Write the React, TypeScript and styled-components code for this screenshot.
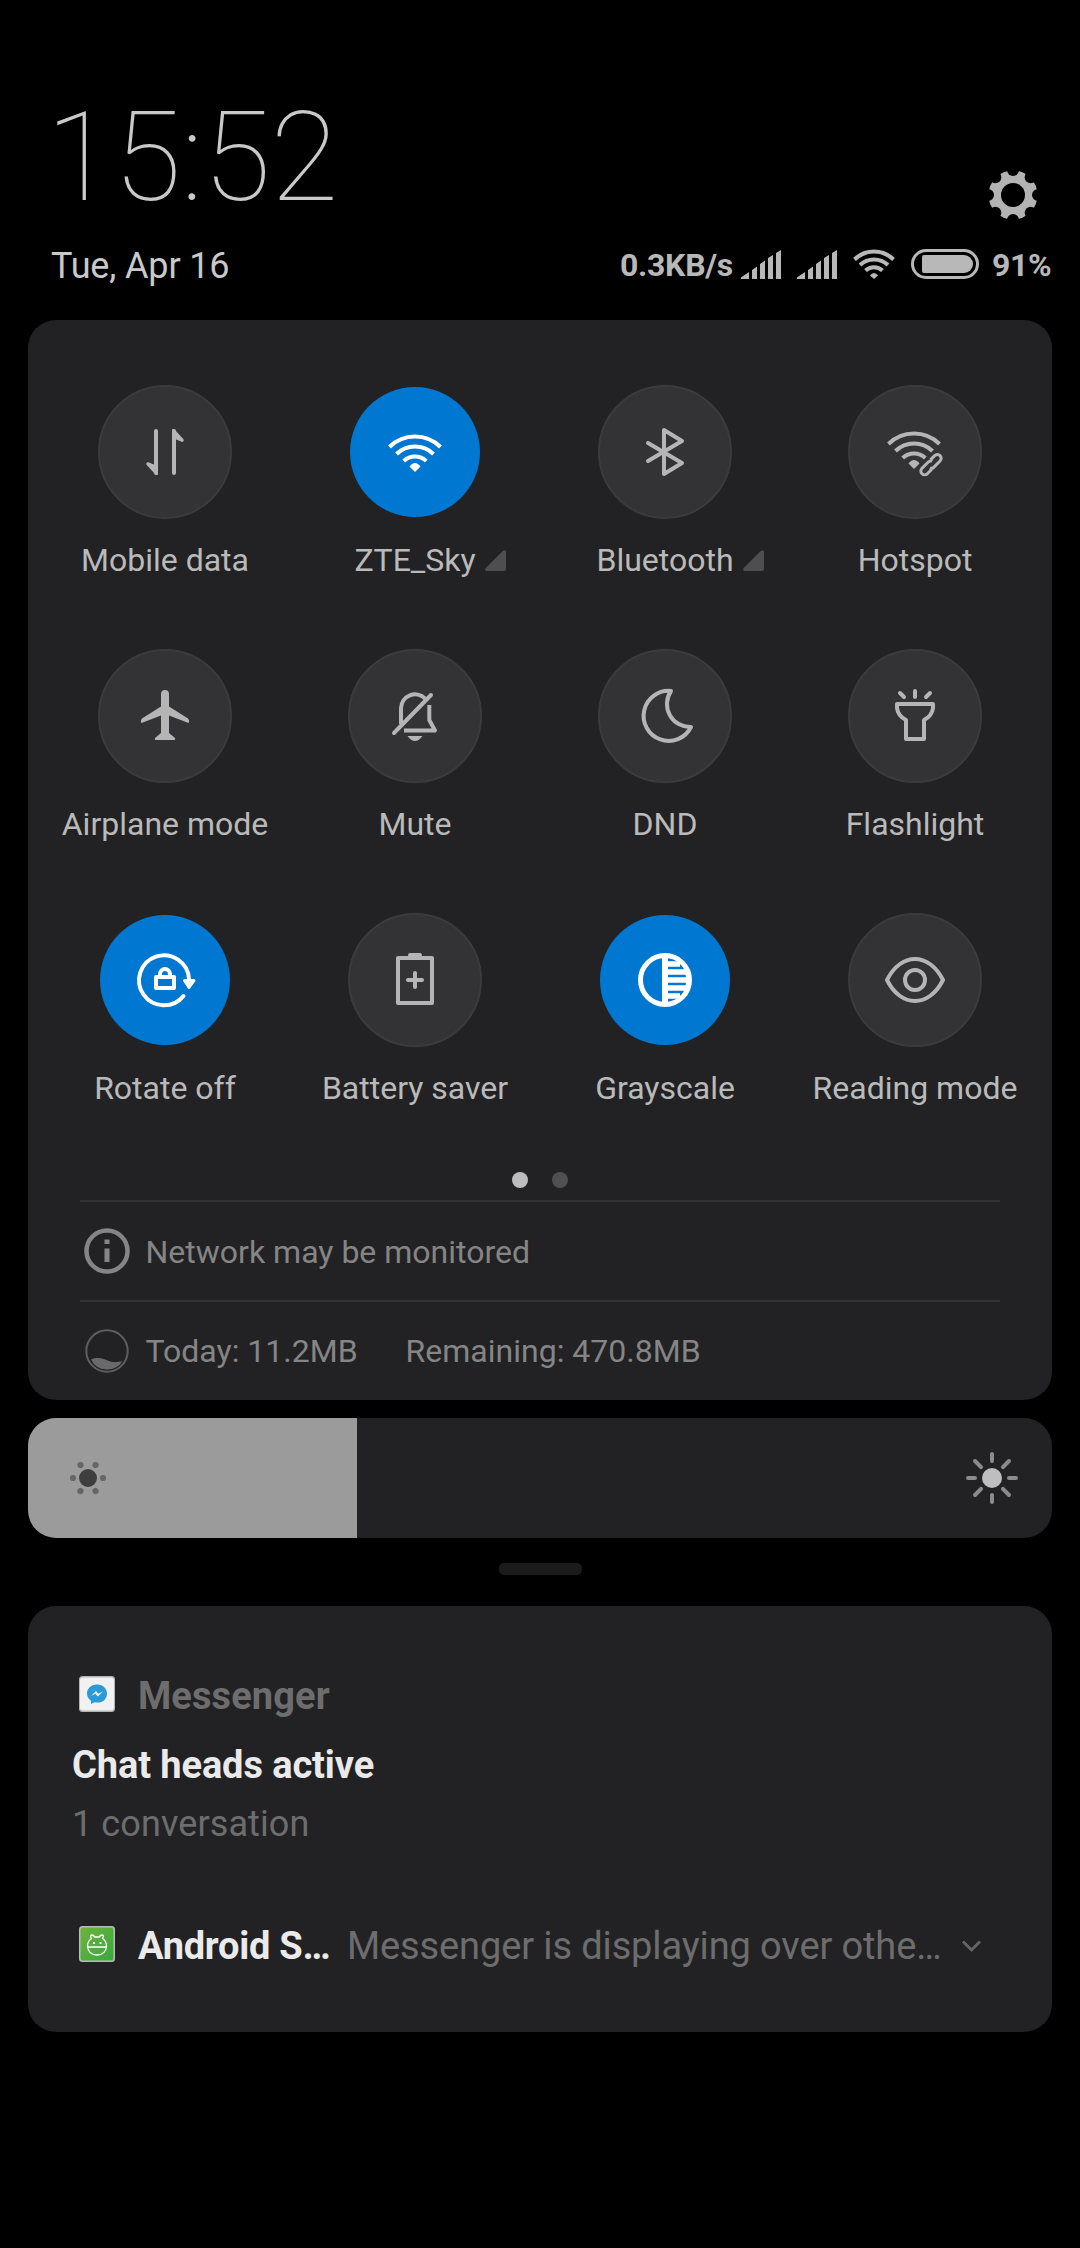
import React from "react";
import styled, { createGlobalStyle } from "styled-components";

const GlobalStyle = createGlobalStyle`
  *, *::before, *::after { box-sizing: border-box; }
  body { margin: 0; background: #000; }
  svg { display: block; flex: none; overflow: visible; }
`;

const Screen = styled.main`
  width: 1080px;
  height: 2248px;
  padding: 82px 28px 0;
  background: #000;
  color: #b8b8b8;
  font-family: Roboto, "Liberation Sans", sans-serif;
  font-size: 32px;
  overflow: hidden;
`;

const Header = styled.header`
  height: 238px;
  display: flex;
  justify-content: space-between;
  padding-left: 18px;
`;

const TimeColumn = styled.div`
  display: flex;
  flex-direction: column;
  color: #c9c9c9;
`;

const Clock = styled.time`
  font-size: 124px;
  font-weight: 100;
  line-height: 146px;
  height: 154px;
  padding-top: 3px;
  letter-spacing: -0.3px;
  white-space: nowrap;
`;

const DateText = styled.div`
  font-size: 36px;
  line-height: 42px;
  letter-spacing: -0.15px;
  margin-top: 9px;
  margin-left: 5px;
`;

const StatusColumn = styled.div`
  display: flex;
  flex-direction: column;
  align-items: flex-end;
`;

const SettingsButton = styled.div`
  margin: 89px 15px 0 0;
`;

const StatusBar = styled.div`
  display: flex;
  align-items: center;
  height: 40px;
  margin-top: 25px;
  font-weight: 700;
`;

const StatusText = styled.span<{ $width: number }>`
  width: ${(p) => p.$width}px;
  margin-top: 2px;
  line-height: 38px;
  letter-spacing: -0.3px;
  white-space: nowrap;
`;

const StatusGlyph = styled.span<{ $gap: number }>`
  margin-right: ${(p) => p.$gap}px;
`;

const Panel = styled.section`
  height: 1080px;
  border-radius: 28px;
  background: #222224;
  padding: 65px 12px 0;
`;

const TileGrid = styled.div`
  display: grid;
  grid-template-columns: repeat(4, 250px);
  grid-auto-rows: 264px;
`;

const Tile = styled.div`
  display: flex;
  flex-direction: column;
  align-items: center;
`;

const TileCircle = styled.div<{ $on?: boolean }>`
  width: ${(p) => (p.$on ? 130 : 134)}px;
  height: ${(p) => (p.$on ? 130 : 134)}px;
  margin: ${(p) => (p.$on ? 2 : 0)}px;
  border-radius: 50%;
  border: ${(p) => (p.$on ? "none" : "2px solid #3b3b3d")};
  background: ${(p) => (p.$on ? "#0077d0" : "#333335")};
  color: ${(p) => (p.$on ? "#fff" : "#b5b5b5")};
  display: flex;
  align-items: center;
  justify-content: center;
`;

const TileLabel = styled.div`
  display: flex;
  align-items: center;
  margin-top: 22px;
  line-height: 38px;
  white-space: nowrap;
  color: #bababa;
`;

/* The negative margin keeps the label text centred under its circle. */
const ExpandMark = styled.span`
  margin: 1px -30px 0 9px;
  color: #4e4e50;
`;

const Pager = styled.div`
  display: flex;
  justify-content: center;
  gap: 24px;
  height: 28px;
  margin-top: -5px;
`;

const PagerDot = styled.span<{ $active?: boolean }>`
  width: 16px;
  height: 16px;
  border-radius: 50%;
  background: ${(p) => (p.$active ? "#bdbdbd" : "#505052")};
`;

const InfoRow = styled.div`
  height: 100px;
  margin: 0 40px;
  padding-left: 4px;
  border-top: 2px solid #333335;
  display: flex;
  align-items: center;
  color: #858585;
`;

const InfoText = styled.span<{ $gap?: number; $drop?: number }>`
  margin: ${(p) => p.$drop ?? 0}px 0 0 ${(p) => p.$gap ?? 15.5}px;
  line-height: 38px;
  white-space: nowrap;
`;

const Slider = styled.div`
  display: flex;
  height: 120px;
  margin-top: 18px;
  border-radius: 28px;
  overflow: hidden;
  background: #222224;
`;

const SliderFill = styled.div`
  width: 329px;
  background: #9b9b9b;
  display: flex;
  align-items: center;
  padding-left: 40px;
`;

const SliderRest = styled.div`
  flex: 1;
  display: flex;
  align-items: center;
  justify-content: flex-end;
  padding-right: 32px;
`;

const Handle = styled.div`
  width: 83px;
  height: 12px;
  margin: 25px auto 31px;
  border-radius: 5px;
  background: #1b1b1b;
`;

const Notifications = styled.section`
  height: 426px;
  padding: 64px 44px 0;
  border-radius: 28px;
  background: #222224;
  white-space: nowrap;
`;

const NotificationHead = styled.div`
  display: flex;
  align-items: center;
  height: 48px;
  padding-left: 7px;
  font-size: 38px;
  line-height: 48px;
`;

const AppName = styled.span<{ $muted?: boolean }>`
  width: 192px;
  margin: 4px 17px 0 23px;
  font-weight: 700;
  letter-spacing: ${(p) => (p.$muted ? 0.1 : -0.25)}px;
  color: ${(p) => (p.$muted ? "#6d6d6e" : "#eaeaea")};
`;

const NotificationTitle = styled.div`
  margin-top: 24px;
  font-size: 38px;
  line-height: 46px;
  font-weight: 700;
  letter-spacing: -0.1px;
  color: #eaeaea;
`;

const NotificationBody = styled.div`
  margin: 14px 0 74px;
  font-size: 36px;
  line-height: 44px;
  letter-spacing: 0.1px;
  color: #6d6d6e;
`;

const Preview = styled.span`
  width: 615px;
  margin-top: 4px;
  letter-spacing: -0.12px;
  color: #6d6d6e;
`;

const ChevronSlot = styled.span`
  margin-top: 4px;
`;

const WifiArcs = () => (
  <g fill="none" stroke="currentColor" strokeWidth="4">
    <path d="M-25.5 -5A36.5 36.5 0 0 1 25.5 -5" />
    <path d="M-18.5 2A26.5 26.5 0 0 1 18.5 2" />
    <path d="M-11.3 9A16.5 16.5 0 0 1 11.3 9" />
    <path d="M0 20L-5.5 14.5Q-3 11 0 11Q3 11 5.5 14.5Z" fill="currentColor" stroke="none" />
  </g>
);

const TileSvg = ({ children }: { children: React.ReactNode }) => (
  <svg width="80" height="80" viewBox="-40 -40 80 80" fill="none" stroke="currentColor" strokeWidth="4" strokeLinecap="round" strokeLinejoin="round">
    {children}
  </svg>
);

const icons: Record<string, React.ReactNode> = {
  data: (
    <>
      <path d="M-9 -21V21M9 21V-21" />
      <path d="M-7 22.5Q-8.500 24 -10.500 21.500L-18.500 12.800Q-19.500 10 -16.500 10.200L-9 13.500ZM7 -22.500Q8.500 -24 10.500 -21.500L18.500 -12.800Q19.500 -10 16.500 -10.200L9 -13.500Z" fill="currentColor" stroke="none" />
    </>
  ),
  wifi: (
    <g strokeLinecap="butt"><WifiArcs /></g>
  ),
  bluetooth: <path d="M-17 -9L17 11L-1 22V-22L17 -11L-17 9" />,
  hotspot: (
    <>
      <g transform="translate(-1 -3)" strokeLinecap="butt"><WifiArcs /></g>
      <g transform="translate(16 12.700) rotate(-45)" strokeWidth="3" strokeLinecap="butt">
        <path d="M3 -1.500Q2.500 -3.800 0 -3.800H-9A3.800 3.800 0 0 0 -9 3.800H-3" />
        <path d="M-3 1.500Q-2.500 3.800 0 3.800H9A3.800 3.800 0 0 0 9 -3.800H3" />
      </g>
    </>
  ),
  airplane: (
    <path d="M0 -26Q4 -26 4 -22V-9.500L23 2.500Q25 5 23.500 7L4 -.500V17L10 22Q10.500 24 9.500 24H-9.500Q-10.500 24 -10 22L-4 17V-.500L-23.500 7Q-25 5 -23 2.500L-4 -9.500V-22Q-4 -26 0 -26Z" fill="currentColor" stroke="none" />
  ),
  mute: (
    <>
      <path d="M-14 8V-8A14 14 0 0 1 10 -17.500M14.300 -11V4L20 14.500H-11" strokeLinecap="butt" />
      <path d="M-21 17L16 -21" />
      <path d="M-7.500 20H7.500Q4 25 0 25Q-4 25 -7.500 20Z" fill="currentColor" stroke="none" />
    </>
  ),
  moon: <path d="M6 -25A25 25 0 1 0 26 11A23 23 0 0 1 6 -25Z" />,
  flashlight: (
    <>
      <path d="M-18 -12H18V-8Q17 0 9 4V23H-9V4Q-17 0 -18 -8Z" />
      <path d="M0 -25V-19M-15 -23L-11 -19M15 -23L11 -19" />
    </>
  ),
  rotate: (
    <>
      <path d="M18.500 16A25 25 0 1 1 24 -1" />
      <path d="M19.500 .5H29L24 7.500Z" fill="currentColor" strokeWidth="3" />
      <rect x="-9" y="-3" width="18" height="11" />
      <path d="M-5 -4V-5.500A5 5.500 0 0 1 5 -5.500V-4" />
    </>
  ),
  battery: (
    <>
      <rect x="-17" y="-22" width="34" height="45" />
      <path d="M-5 -25H5" />
      <path d="M-7 0H7M0 -7V7" />
    </>
  ),
  grayscale: (
    <g strokeLinecap="butt">
      <circle r="24.500" strokeWidth="5" />
      <path d="M0 -24V24" strokeWidth="6" />
      <path d="M0 -16H15M0 -8H22M0 0H24M0 8H22M0 16H15" strokeWidth="5.500" />
      <path d="M20 -12A23 23 0 0 1 20 12" strokeWidth="4" />
    </g>
  ),
  eye: (
    <>
      <path d="M-28 0C-14 -28 14 -28 28 0C14 28 -14 28 -28 0Z" />
      <circle r="10" />
    </>
  ),
};

const tiles = [
  { icon: "data", label: "Mobile data" },
  { icon: "wifi", label: "ZTE_Sky", on: true, expands: true },
  { icon: "bluetooth", label: "Bluetooth", expands: true },
  { icon: "hotspot", label: "Hotspot" },
  { icon: "airplane", label: "Airplane mode" },
  { icon: "mute", label: "Mute" },
  { icon: "moon", label: "DND" },
  { icon: "flashlight", label: "Flashlight" },
  { icon: "rotate", label: "Rotate off", on: true },
  { icon: "battery", label: "Battery saver" },
  { icon: "grayscale", label: "Grayscale", on: true },
  { icon: "eye", label: "Reading mode" },
];

const GearIcon = () => (
  <svg width="48" height="48" viewBox="-24 -24 48 48">
    <defs>
      <mask id="gear-cut">
        <rect x="-24" y="-24" width="48" height="48" fill="#fff" />
        <circle r="12" fill="#000" />
        {Array.from({ length: 8 }, (_, i) => (
          <circle key={i} cy="-25" r="6" fill="#000" transform={`rotate(${i * 45})`} />
        ))}
      </mask>
    </defs>
    <circle r="24.500" fill="#b3b3b3" mask="url(#gear-cut)" />
  </svg>
);

const SignalIcon = () => (
  <svg width="40" height="29" viewBox="0 0 40 29" fill="#b8b8b8">
    <path d="M8 22V29H0V27.500ZM11 20L16 16.500V29H11ZM19 14L24 10.500V29H19ZM27 8L32 5V29H27ZM35 3L40 0V29H35Z" />
  </svg>
);

const StatusWifi = () => (
  <svg width="42" height="30" viewBox="0 0 42 30" fill="none" stroke="#b8b8b8" strokeWidth="4">
    <path d="M1.500 10.500A28 28 0 0 1 40.500 10.500M7 16A20.500 20.500 0 0 1 35 16M12.500 21.500A12.500 12.500 0 0 1 29.500 21.500" />
    <path d="M21 30L17 26.500Q18.500 24 21 24Q23.500 24 25 26.500Z" fill="#b8b8b8" stroke="none" />
  </svg>
);

const BatteryIcon = () => (
  <svg width="68" height="30" viewBox="0 0 68 30">
    <rect x="1.500" y="1.500" width="65" height="27" rx="13.500" fill="none" stroke="#b8b8b8" strokeWidth="3" />
    <path d="M13 6H53A9 9 0 0 1 53 24H13Q11 24 11 22V8Q11 6 13 6Z" fill="#b8b8b8" />
  </svg>
);

const ExpandTriangle = () => (
  <svg width="21" height="21" viewBox="0 0 21 21" fill="currentColor">
    <path d="M18 .8Q21 -1 21 2V19Q21 21 19 21H2Q-1 21 .8 18Z" />
  </svg>
);

const InfoIcon = () => (
  <svg width="46" height="46" viewBox="-23 -23 46 46">
    <circle r="20.500" fill="none" stroke="#858585" strokeWidth="4.500" />
    <path d="M-2.500 -11.500H2.500V-7H-2.500ZM-2.500 -2.500H2.500V11H-2.500Z" fill="#858585" />
  </svg>
);

const DataUsageIcon = () => (
  <svg width="46" height="46" viewBox="-23 -23 46 46">
    <circle r="20.700" fill="none" stroke="#5e5e60" strokeWidth="2" />
    <path d="M-16 8.500C-9 5.500 -3 8 2 10C7 12 12 11 15.500 10A18 18 0 0 1 -16 8.500Z" fill="#6a6a6b" />
  </svg>
);

const DimSun = () => (
  <svg width="40" height="40" viewBox="-20 -20 40 40">
    <circle r="9" fill="#3e3e3e" />
    {Array.from({ length: 6 }, (_, i) => (
      <circle key={i} cx="15" r="3.100" fill="#666" transform={`rotate(${i * 60})`} />
    ))}
  </svg>
);

const BrightSun = () => (
  <svg width="56" height="56" viewBox="-28 -28 56 56">
    <circle r="10" fill="#bebebe" />
    {Array.from({ length: 8 }, (_, i) => (
      <path key={i} d={i % 2 ? "M0 -15.500V-24" : "M0 -17V-24"} stroke="#8b8b8b" strokeWidth="4" strokeLinecap="round" transform={`rotate(${i * 45})`} />
    ))}
  </svg>
);

const MessengerIcon = () => (
  <svg width="36" height="36" viewBox="0 0 36 36">
    <rect width="36" height="36" rx="3.500" fill="#b5b5b5" />
    <rect x="1" y="1.500" width="34" height="33" rx="3" fill="#f1f1f1" />
    <path d="M18 8.500C12 8.500 8 12.500 8 17.500C8 20.500 9.500 23 12 24.700V28L15.500 26.300C24 28 28 22.500 28 17.500C28 12.500 24 8.500 18 8.500Z" fill="#2a9ad8" />
    <path d="M12 20L17 15L19.500 17.800L24 15.200L19 20.500L16.300 17.700Z" fill="#f1f1f1" />
  </svg>
);

const AndroidIcon = () => (
  <svg width="36" height="36" viewBox="0 0 36 36">
    <defs>
      <linearGradient id="leaf" x1="0" y1="0" x2="1" y2="1">
        <stop offset="0" stopColor="#6cb33b" />
        <stop offset="1" stopColor="#38a93f" />
      </linearGradient>
    </defs>
    <rect width="36" height="36" rx="3.500" fill="#b9bdb8" />
    <rect x="1.500" y="1.500" width="33" height="33" rx="2.500" fill="url(#leaf)" />
    <g fill="none" stroke="#fff" strokeWidth="1.300" strokeLinejoin="round">
      <path d="M8.500 20.500Q8.500 15 12.500 12.500Q10.500 9.500 13 9Q15 9 15.500 11H20.500Q21 9 23 9Q25.500 9.500 23.500 12.500Q27.500 15 27.500 20.500Q26.500 29 18 29Q9.500 29 8.500 20.500ZM8.500 21H27.500" />
    </g>
    <path d="M14 16h2v2h-2zM20.500 16h2v2h-2z" fill="#fff" />
  </svg>
);

const Chevron = () => (
  <svg width="19" height="12" viewBox="0 0 19 12" fill="none" stroke="#646465" strokeWidth="3">
    <path d="M1 1.500L9.500 10L18 1.500" />
  </svg>
);

export default function App() {
  return (
    <Screen>
      <GlobalStyle />
      <Header>
        <TimeColumn>
          <Clock>15:52</Clock>
          <DateText>Tue, Apr 16</DateText>
        </TimeColumn>
        <StatusColumn>
          <SettingsButton><GearIcon /></SettingsButton>
          <StatusBar>
            <StatusText $width={121}>0.3KB/s</StatusText>
            <StatusGlyph $gap={16}><SignalIcon /></StatusGlyph>
            <StatusGlyph $gap={16}><SignalIcon /></StatusGlyph>
            <StatusGlyph $gap={16}><StatusWifi /></StatusGlyph>
            <StatusGlyph $gap={13}><BatteryIcon /></StatusGlyph>
            <StatusText $width={60}>91%</StatusText>
          </StatusBar>
        </StatusColumn>
      </Header>

      <Panel>
        <TileGrid>
          {tiles.map((t) => (
            <Tile key={t.label}>
              <TileCircle $on={t.on}>
                <TileSvg>{icons[t.icon]}</TileSvg>
              </TileCircle>
              <TileLabel>
                {t.label}
                {t.expands && <ExpandMark><ExpandTriangle /></ExpandMark>}
              </TileLabel>
            </Tile>
          ))}
        </TileGrid>
        <Pager>
          <PagerDot $active />
          <PagerDot />
        </Pager>
        <InfoRow>
          <InfoIcon />
          <InfoText $drop={2}>Network may be monitored</InfoText>
        </InfoRow>
        <InfoRow>
          <DataUsageIcon />
          <InfoText>Today: 11.2MB</InfoText>
          <InfoText $gap={48}>Remaining: 470.8MB</InfoText>
        </InfoRow>
      </Panel>

      <Slider>
        <SliderFill><DimSun /></SliderFill>
        <SliderRest><BrightSun /></SliderRest>
      </Slider>
      <Handle />

      <Notifications>
        <NotificationHead>
          <MessengerIcon />
          <AppName $muted>Messenger</AppName>
        </NotificationHead>
        <NotificationTitle>Chat heads active</NotificationTitle>
        <NotificationBody>1 conversation</NotificationBody>
        <NotificationHead>
          <AndroidIcon />
          <AppName>Android S…</AppName>
          <Preview>Messenger is displaying over othe…</Preview>
          <ChevronSlot><Chevron /></ChevronSlot>
        </NotificationHead>
      </Notifications>
    </Screen>
  );
}
